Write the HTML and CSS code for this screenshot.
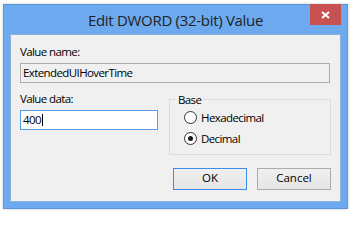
FILE: index.html
```html
<!DOCTYPE html>
<html>
<head>
<meta charset="utf-8">
<title>Edit DWORD (32-bit) Value</title>
<link rel="stylesheet" href="styles.css">
</head>
<body>
<div class="window">
  <div class="titlebar">
    <span class="title">Edit DWORD (32-bit) Value</span>
    <div class="close"><svg width="9" height="8" viewBox="0 0 9 8"><path d="M1 1L8 7M8 1L1 7" stroke="#fff" stroke-width="2" fill="none"/></svg></div>
  </div>
  <div class="client">
    <div class="label">Value name:</div>
    <div class="field field-readonly">ExtendedUIHoverTime</div>
    <div class="row">
      <div class="col-data">
        <div class="label">Value data:</div>
        <div class="field field-focus">400<span class="caret"></span></div>
      </div>
      <fieldset class="group">
        <legend>Base</legend>
        <div class="radio"><span class="dot"></span>Hexadecimal</div>
        <div class="radio checked"><span class="dot"></span>Decimal</div>
      </fieldset>
    </div>
    <div class="buttons">
      <div class="btn btn-default">OK</div>
      <div class="btn">Cancel</div>
    </div>
  </div>
</div>
</body>
</html>
```
FILE: styles.css
```css
* { box-sizing: border-box; }
html, body { margin: 0; padding: 0; }
body {
  background: #fff;
  width: 353px;
  height: 213px;
  overflow: hidden;
  font-family: "Open Sans", "Noto Sans", sans-serif;
  font-size: 11.5px;
  color: #000;
}
.window {
  margin: 4px 0 0 3px;
  width: 345px;
  height: 205px;
  border: 1px solid #5b95da;
  background: #6ca9ef;
  padding: 0 6px 6px;
  display: flex;
  flex-direction: column;
  box-shadow: 0 0 3px rgba(0,0,0,.2);
}
.titlebar {
  position: relative;
  height: 29px;
  display: flex;
  align-items: center;
  justify-content: center;
}
.title {
  font-size: 15px;
  letter-spacing: -0.3px;
  color: #222;
  line-height: 20px;
}
.close {
  position: absolute;
  right: 0;
  top: -1px;
  width: 31px;
  height: 21px;
  background: #c75050;
  display: flex;
  align-items: center;
  justify-content: center;
}
.close svg { display: block; }
.client {
  height: 168px;
  border: 1px solid #8cb1dc;
  background: #f0f0f0;
  padding: 9px 9px 0 9px;
  display: flex;
  flex-direction: column;
}
.label {
  line-height: 15px;
  height: 15px;
  letter-spacing: -0.6px;
}
.field {
  margin-top: 4px;
  height: 20px;
  border: 1px solid #adadad;
  padding: 0 2px;
  line-height: 17px;
  letter-spacing: -0.6px;
  white-space: nowrap;
}
.field-readonly { width: 310px; }
.row {
  display: flex;
  gap: 11px;
  margin-top: 8px;
  align-items: flex-start;
}
.col-data { width: 138px; }
.field-focus {
  background: #fff;
  border-color: #569de5;
}
.caret {
  display: inline-block;
  width: 1px;
  height: 12px;
  background: #000;
  vertical-align: -2px;
  margin-left: 1px;
}
.group {
  width: 162px;
  margin: 1px 0 0;
  border: 1px solid #dcdcdc;
  padding: 0 6px 8px 6px;
  min-width: 0;
}
.group legend {
  padding: 0 2px;
  line-height: 15px;
  letter-spacing: -0.6px;
}
.radio {
  display: flex;
  align-items: center;
  margin-left: 8px;
  height: 15px;
  line-height: 15px;
  margin-top: 6px;
  letter-spacing: -0.6px;
}
.radio:first-of-type { margin-top: 3px; }
.dot {
  flex: none;
  width: 13px;
  height: 13px;
  border: 1px solid #333;
  border-radius: 50%;
  background: #fff;
  margin-right: 4px;
  display: flex;
  align-items: center;
  justify-content: center;
}
.checked .dot::after {
  content: "";
  width: 5px;
  height: 5px;
  border-radius: 50%;
  background: #1a1a1a;
}
.buttons {
  display: flex;
  justify-content: flex-end;
  gap: 10px;
  margin-top: 13px;
}
.btn {
  width: 74px;
  height: 22px;
  border: 1px solid #acacac;
  background: linear-gradient(#f0f0f0, #e5e5e5);
  text-align: center;
  line-height: 18px;
  padding-bottom: 2px;
}
.btn-default { border-color: #3c8ee6; }
```
